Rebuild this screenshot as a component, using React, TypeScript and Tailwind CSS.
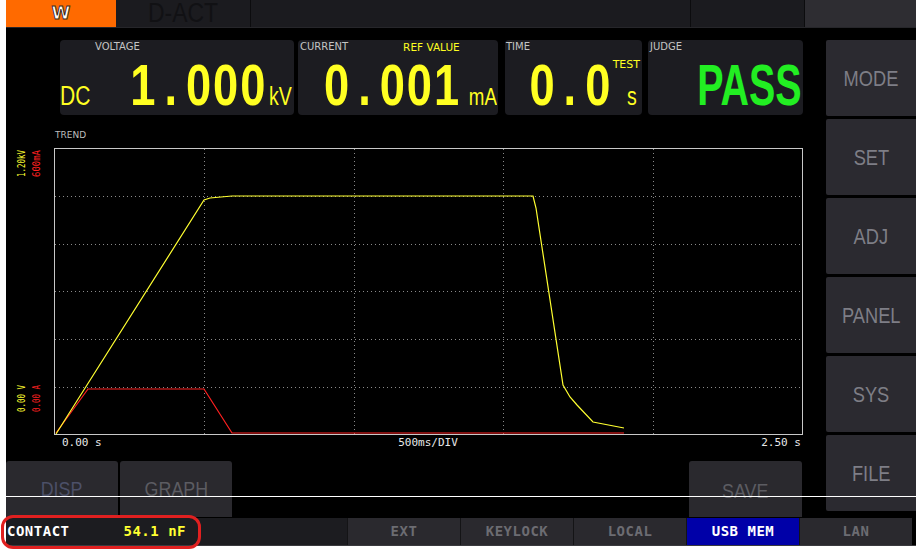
import React from "react"

const sans = "font-['Liberation_Sans','Arimo',sans-serif]"
const mono = "font-['DejaVu_Sans_Mono','Liberation_Mono',monospace]"
const label = "text-[10px] leading-[10px] font-['DejaVu_Sans',sans-serif]"

function Num({ v }: { v: string }) {
  const [a, b] = v.split(".")
  return (
    <span className="text-[58px] font-bold tracking-[2.5px]">
      {a}
      <span className="mx-[9px]">.</span>
      {b}
    </span>
  )
}

function Chart() {
  const vx = [204, 354, 503, 653]
  const hy = [196, 244, 291, 339, 387]
  return (
    <svg width={820} height={330} viewBox="6 125 820 330" className="block mt-[10px]">
      <text x={55} y={138} fill="#bdbdbd" fontSize={9} fontFamily="DejaVu Sans, sans-serif">TREND</text>
      {vx.map((x) => (
        <line key={x} x1={x + 0.5} y1={149} x2={x + 0.5} y2={434} stroke="#8a8a8a" strokeDasharray="1 3" />
      ))}
      {hy.map((y) => (
        <line key={y} x1={55} y1={y + 0.5} x2={802} y2={y + 0.5} stroke="#8a8a8a" strokeDasharray="1 3" />
      ))}
      <rect x={54.5} y={148.5} width={748} height={286} fill="none" stroke="#c8c8c8" />
      <polyline
        points="56,433 88,389 204,389 232,433 624,433"
        fill="none"
        stroke="#ff2020"
        strokeWidth={1.2}
      />
      <polyline
        points="56,434 204,200 210,198 232,196 533,196 536,208 563,385 570,397 577,405 593,422 624,428"
        fill="none"
        stroke="#ffff30"
        strokeWidth={1.2}
      />
      <g fontFamily="DejaVu Sans Mono, monospace" fontSize={11}>
        <text transform="translate(25,177) rotate(-90)" fill="#ffff30" textLength={27} lengthAdjust="spacingAndGlyphs">1.20kV</text>
        <text transform="translate(40,177) rotate(-90)" fill="#ff2020" textLength={27} lengthAdjust="spacingAndGlyphs">600mA</text>
        <text transform="translate(25,412) rotate(-90)" fill="#ffff30" textLength={27} lengthAdjust="spacingAndGlyphs">0.00 V</text>
        <text transform="translate(40,412) rotate(-90)" fill="#ff2020" textLength={27} lengthAdjust="spacingAndGlyphs">0.00 A</text>
      </g>
      <g fontFamily="DejaVu Sans Mono, monospace" fontSize={11} fill="#e8e8e8">
        <text x={62} y={446}>0.00 s</text>
        <text x={428} y={446} textAnchor="middle">500ms/DIV</text>
        <text x={801} y={446} textAnchor="end">2.50 s</text>
      </g>
    </svg>
  )
}

function SideButton({ label }: { label: string }) {
  return (
    <div className={`h-[76px] w-[90px] rounded-l-[2px] bg-[#2b2a30] flex items-center justify-center text-[22px] text-[#7e7e86] ${sans}`}>
      <span className="inline-block scale-x-[0.83]">{label}</span>
    </div>
  )
}

function SoftKey({ label, color, className }: { label: string; color: string; className?: string }) {
  return (
    <div className={`w-[112px] rounded-t-[3px] bg-[#2a292e] flex items-center justify-center text-[21px] ${sans} ${color} ${className ?? ""}`}>
      <span className="inline-block scale-x-[0.85]">{label}</span>
    </div>
  )
}

function StatusCell({ label, active }: { label: string; active?: boolean }) {
  return (
    <div
      className={`w-[113px] flex items-center justify-center border-l border-[#141416] text-[14px] font-bold tracking-[0.5px] ${mono} ${
        active ? "bg-[#0000a8] text-white" : "bg-[#2a292e] text-[#6c6c72]"
      }`}
    >
      {label}
    </div>
  )
}

export default function App() {
  return (
    <div className="relative w-[920px] h-[552px] bg-white overflow-hidden">
      <div className="relative ml-[6px] w-[910px] h-[546px] bg-black flex flex-col">
        {/* top tabs */}
        <div className="h-[28px] flex bg-[#1b1b1f] border-b border-[#26262a]">
          <div className="w-[110px] bg-[#ff6a00] flex items-center justify-center">
            <span className="text-[17px] leading-none font-bold text-white [-webkit-text-stroke:1px_#3a2a20] font-['DejaVu_Sans',sans-serif]">W</span>
          </div>
          <div className={`w-[132px] ml-[2px] flex items-center pl-[30px] text-[27px] leading-none text-[#111114] ${sans}`}>
            <span className="inline-block scale-x-[0.85] origin-left">D-ACT</span>
          </div>
          <div className="w-[440px] border-l border-[#0c0c0e]"></div>
          <div className="w-[114px] border-l border-[#0c0c0e]"></div>
          <div className="flex-1 border-l border-[#0c0c0e] bg-[#2e2d32]"></div>
        </div>

        <div className="flex flex-1">
          {/* left area */}
          <div className="w-[820px] flex flex-col">
            {/* readouts */}
            <div className="flex pt-[12px] pl-[54px] h-[87px]">
              <div className="w-[234px] h-[75px] rounded-[4px] bg-[#1c1c21] flex flex-col">
                <div className={`h-[13px] pl-[35px] pt-[2px] text-[#c4c4c4] ${label}`}>VOLTAGE</div>
                <div className={`w-[300px] scale-x-[0.78] origin-left flex items-baseline h-[58px] leading-[58px] mt-[3px] text-[#ffff22] ${sans}`}>
                  <span className="text-[27px] mr-auto">DC</span>
                  <Num v="1.000" />
                  <span className="text-[25px] ml-[2px] mr-[3px]">kV</span>
                </div>
              </div>
              <div className="w-[200px] ml-[4px] h-[75px] rounded-[4px] bg-[#1c1c21] flex flex-col">
                <div className={`h-[13px] pl-[2px] pt-[2px] flex ${label}`}>
                  <span className="text-[#c4c4c4]">CURRENT</span>
                  <span className="ml-[55px] text-[#ffff22] text-[10.5px]">REF VALUE</span>
                </div>
                <div className={`w-[256px] scale-x-[0.78] origin-left flex items-baseline justify-end h-[58px] leading-[58px] mt-[3px] text-[#ffff22] ${sans}`}>
                  <Num v="0.001" />
                  <span className="text-[24px] ml-[10px] mr-[1px]">mA</span>
                </div>
              </div>
              <div className="w-[137px] ml-[7px] h-[75px] rounded-[4px] bg-[#1c1c21] flex flex-col">
                <div className={`h-[13px] pl-[1px] pt-[2px] text-[#c4c4c4] ${label}`}>TIME</div>
                <div className="relative h-[58px] mt-[3px]">
                  <div className={`w-[176px] scale-x-[0.78] origin-left flex items-baseline justify-end h-[58px] leading-[58px] text-[#ffff22] ${sans}`}>
                    <Num v="0.0" />
                    <span className="text-[25px] ml-[19px] mr-[7px]">s</span>
                  </div>
                  <span className="absolute right-[2px] top-[3px] text-[11px] leading-[11px] text-[#ffff22] font-['DejaVu_Sans',sans-serif]">TEST</span>
                </div>
              </div>
              <div className="w-[155px] ml-[6px] h-[75px] rounded-[4px] bg-[#1c1c21] flex flex-col">
                <div className={`h-[13px] pl-[2px] pt-[2px] text-[#c4c4c4] ${label}`}>JUDGE</div>
                <div className={`w-[228px] scale-x-[0.68] origin-left flex items-baseline justify-end h-[58px] leading-[58px] mt-[3px] text-[#22ee22] ${sans}`}>
                  <span className="text-[58px] font-bold mr-[2px]">PASS</span>
                </div>
              </div>
            </div>

            <Chart />

            {/* soft keys */}
            <div className="flex mt-[6px] h-[56px]">
              <SoftKey label="DISP" color="text-[#4c5068]" />
              <SoftKey label="GRAPH" color="text-[#5c5c62]" className="ml-[2px]" />
              <SoftKey label="SAVE" color="text-[#5c5c62]" className="ml-[457px] w-[113px] pt-[3px]" />
            </div>
          </div>

          {/* right menu */}
          <div className="flex flex-col gap-[3px] pt-[12px]">
            <SideButton label="MODE" />
            <SideButton label="SET" />
            <SideButton label="ADJ" />
            <SideButton label="PANEL" />
            <SideButton label="SYS" />
            <SideButton label="FILE" />
          </div>
        </div>

        {/* status bar */}
        <div className="h-[28px] flex border-b border-[#3a3a3e]">
          <div className={`w-[341px] bg-[#1c1c20] flex items-center text-[14px] font-bold tracking-[0.5px] ${mono}`}>
            <span className="ml-[1px] text-white">CONTACT</span>
            <span className="ml-[54px] text-[#ffff30]">54.1 nF</span>
          </div>
          <StatusCell label="EXT" />
          <StatusCell label="KEYLOCK" />
          <StatusCell label="LOCAL" />
          <StatusCell label="USB MEM" active />
          <StatusCell label="LAN" />
        </div>

        {/* overlay white rule */}
        <div className="absolute left-0 right-0 top-[496px] h-[1px] bg-white"></div>
      </div>

      {/* red annotation around contact */}
      <div className="absolute left-[1px] top-[515px] w-[200px] h-[34px] rounded-[12px] border-[3px] border-[#e02020]"></div>
    </div>
  )
}
